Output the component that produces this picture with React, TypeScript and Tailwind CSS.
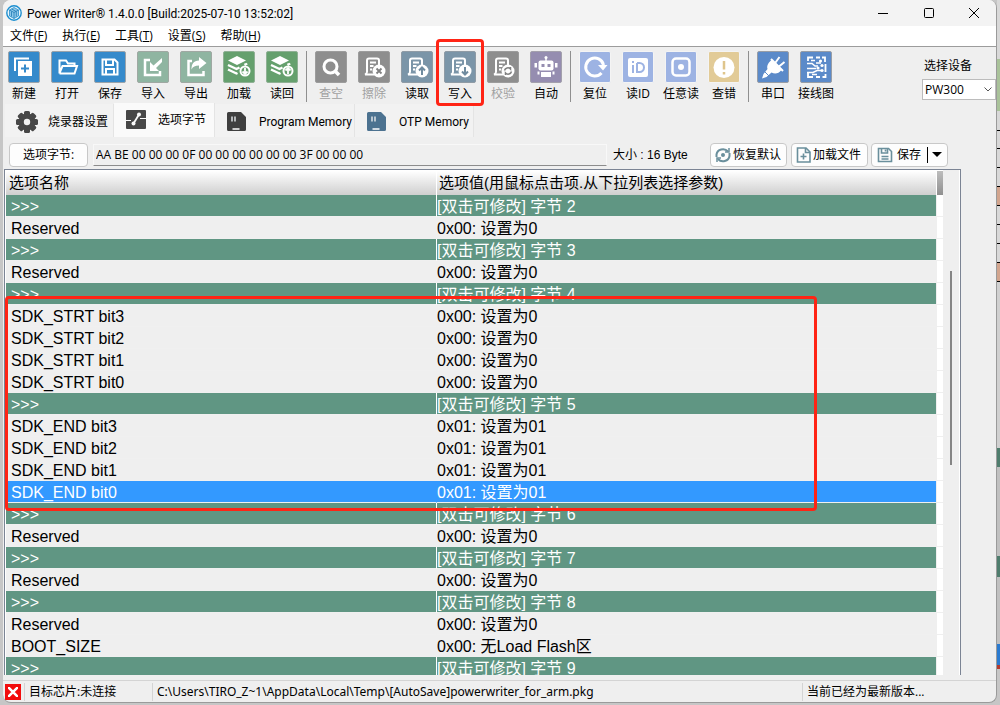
import { useState } from "react"
import type { ReactNode } from "react"

// ============================================
// TYPES & DATA
// ============================================

type Tool = {
  id: string
  label: string
  box: string
  disabled?: boolean
  marked?: boolean
}

const BLUE = "bg-[#358acb] border-[#9aa3aa]"
const MINT = "bg-[#8fb5a1] border-[#9fa8a2]"
const GREEN = "bg-[#65a06d] border-[#8fb094]"
const GRAY = "bg-[#8e8e8e] border-[#9c9c9c]"
const STEEL = "bg-[#7b95a8] border-[#8f9ba5]"
const PURPLE = "bg-[#958db0] border-[#a3a0ac]"
const SKY = "bg-[#9db3e3] border-[#f4f4f4]"
const SAND = "bg-[#e2cb97] border-[#f4f4f4]"
const ROYAL = "bg-[#5b8ac9] border-[#989da5]"

const toolGroups: Tool[][] = [
  [
    { id: "new", label: "新建", box: BLUE },
    { id: "open", label: "打开", box: BLUE },
    { id: "save", label: "保存", box: BLUE },
    { id: "import", label: "导入", box: MINT },
    { id: "export", label: "导出", box: MINT },
    { id: "load", label: "加载", box: GREEN },
    { id: "readback", label: "读回", box: GREEN },
  ],
  [
    { id: "blank", label: "查空", box: GRAY, disabled: true },
    { id: "erase", label: "擦除", box: GRAY, disabled: true },
    { id: "read", label: "读取", box: STEEL },
    { id: "write", label: "写入", box: STEEL, marked: true },
    { id: "verify", label: "校验", box: GRAY, disabled: true },
    { id: "auto", label: "自动", box: PURPLE },
  ],
  [
    { id: "reset", label: "复位", box: SKY },
    { id: "readid", label: "读ID", box: SKY },
    { id: "readany", label: "任意读", box: SKY },
    { id: "error", label: "查错", box: SAND },
  ],
  [
    { id: "serial", label: "串口", box: ROYAL },
    { id: "wiring", label: "接线图", box: ROYAL },
  ],
]

const menus = [
  { label: "文件", hotkey: "F" },
  { label: "执行", hotkey: "E" },
  { label: "工具", hotkey: "T" },
  { label: "设置", hotkey: "S" },
  { label: "帮助", hotkey: "H" },
]

type Row = { name: string; value: string; kind?: "group" }

const group = (n: number): Row => ({ name: ">>>", value: `[双击可修改] 字节 ${n}`, kind: "group" })
const zero = (name: string): Row => ({ name, value: "0x00: 设置为0" })
const one = (name: string): Row => ({ name, value: "0x01: 设置为01" })

const rows: Row[] = [
  group(2),
  zero("Reserved"),
  group(3),
  zero("Reserved"),
  group(4),
  zero("SDK_STRT bit3"),
  zero("SDK_STRT bit2"),
  zero("SDK_STRT bit1"),
  zero("SDK_STRT bit0"),
  group(5),
  one("SDK_END bit3"),
  one("SDK_END bit2"),
  one("SDK_END bit1"),
  one("SDK_END bit0"),
  group(6),
  zero("Reserved"),
  group(7),
  zero("Reserved"),
  group(8),
  zero("Reserved"),
  { name: "BOOT_SIZE", value: "0x00: 无Load Flash区" },
  group(9),
]

// ============================================
// ICONS
// ============================================

const layers = (
  <>
    <path d="M5 9.500 14 5l9 4.500-9 4.500z" fill="currentColor" stroke="none" />
    <path d="M5 14l8.500 4 3-1.500M5 18.500l8.500 4 1-.5M22.500 12.500l.5.5-1.500 1" strokeWidth="2.400" />
  </>
)

const sheet = (
  <>
    <path d="M21 14V9.500a2 2 0 0 0-2-2H11a2 2 0 0 0-2 2V21a3 3 0 0 1-2 2.500h9M9 20H8" />
    <path d="M12 11.500h6M12 15h3.500M12 18.500h2" />
  </>
)

const toolIcons: Record<string, ReactNode> = {
  new: (
    <>
      <path d="M7 20V7.500h14" strokeWidth="2" />
      <path d="M10 10h14v15H10z" fill="currentColor" stroke="none" />
      <path d="M17 13.500v8M13 17.500h8" stroke="#358acb" strokeWidth="2" />
    </>
  ),
  open: <path d="M8.500 22.500V9.500H15l2 3h6.500V15M8.500 22l3-7H26l-2.500 7.500h-15" strokeWidth="2" />,
  save: (
    <>
      <path d="M8.500 8.500h12l3 3v12h-15z" strokeWidth="2" />
      <path d="M12 9v5h7V9M12 23v-5h8v5" strokeWidth="2" />
    </>
  ),
  import: (
    <>
      <path d="M13 9H8v15h15v-4" strokeWidth="2.500" />
      <path d="M13 11v9h9l-3-3 6-6v-4l-8.500 7.500z" fill="currentColor" stroke="none" />
    </>
  ),
  export: (
    <>
      <path d="M12 10H8.500v14h15v-4" strokeWidth="2.500" />
      <path d="M19 6l7.500 6L19 18v-3.500c-4 0-6 1-7.500 4 0-5.500 2-9 7.500-9z" fill="currentColor" stroke="none" />
    </>
  ),
  load: (
    <>
      {layers}
      <circle cx="22" cy="20" r="4.500" strokeWidth="2" />
      <path d="M22 17v5.500M19.500 20.500l2.500 2.500 2.500-2.500" strokeWidth="1.800" />
    </>
  ),
  readback: (
    <>
      {layers}
      <circle cx="22" cy="20" r="4.500" strokeWidth="2" />
      <path d="M22 23v-5.500M19.500 19.500 22 17l2.500 2.500" strokeWidth="1.800" />
    </>
  ),
  blank: (
    <>
      <circle cx="15.500" cy="15.500" r="6.500" strokeWidth="3" />
      <path d="M20 20l4 4" strokeWidth="3.500" />
    </>
  ),
  erase: (
    <>
      {sheet}
      <circle cx="21" cy="20" r="6.500" fill="currentColor" stroke="none" />
      <path d="M18.500 17.500l5 5M23.500 17.500l-5 5" stroke="#7f7f7f" strokeWidth="1.800" />
    </>
  ),
  read: (
    <>
      {sheet}
      <circle cx="21" cy="20" r="6.500" fill="currentColor" stroke="none" />
      <path d="M21 24v-6M18 19.500l3-3 3 3" stroke="#6f8b9f" strokeWidth="2" />
    </>
  ),
  write: (
    <>
      {sheet}
      <circle cx="21" cy="20" r="6.500" fill="currentColor" stroke="none" />
      <path d="M21 16v6M18 20.500l3 3 3-3" stroke="#6f8b9f" strokeWidth="2" />
    </>
  ),
  verify: (
    <>
      {sheet}
      <circle cx="21" cy="20" r="6.500" fill="currentColor" stroke="none" />
      <path d="M17.500 19.500a3.500 3.500 0 0 1 6-1.500v-2M24.500 20.500a3.500 3.500 0 0 1-6 1.500v2" stroke="#7f7f7f" strokeWidth="1.500" />
    </>
  ),
  auto: (
    <>
      <rect x="8.500" y="9.500" width="15" height="10" rx="2" fill="currentColor" stroke="none" />
      <path d="M11 21h10v5H11zM4.500 12H7v4.500H4.500zM25 12h2.500v4.500H25zM7.500 20.500h2v3h-2zM22.500 20.500h2v3h-2z" fill="currentColor" stroke="none" />
      <path d="M16 10V7" strokeWidth="1.500" />
      <circle cx="16" cy="6.500" r="1.500" fill="currentColor" stroke="none" />
      <path d="M11.500 13h3v3h-3zM17.500 13h3v3h-3z" fill="#958db0" stroke="none" />
    </>
  ),
  reset: (
    <>
      <path d="M22.500 22a9 9 0 1 1 2-8" strokeWidth="3" />
      <path d="M19 14h9.500l-4.500 5.500z" fill="currentColor" stroke="none" />
    </>
  ),
  readid: (
    <>
      <rect x="6" y="7" width="20" height="19" rx="2" fill="currentColor" stroke="none" />
      <path d="M11 14v8M11 10v2M15 12v9h2.500a4.500 4.500 0 0 0 0-9H15" stroke="#9db3e3" strokeWidth="2" />
    </>
  ),
  readany: (
    <>
      <rect x="7.500" y="7.500" width="17" height="17" rx="3.500" strokeWidth="2.500" />
      <circle cx="16" cy="16" r="3" fill="currentColor" stroke="none" />
    </>
  ),
  error: (
    <>
      <circle cx="16" cy="16.500" r="10.500" fill="currentColor" stroke="none" />
      <path d="M16 10v8.500M16 21v2.500" stroke="#dfc58c" strokeWidth="2.500" />
    </>
  ),
  serial: (
    <>
      <path d="M14.500 9l10 10c-3 4-7 4-10 2.500L9.500 26l-4.500 1.500L6.500 23l4-5c-1-3.500 1-6.500 4-9z" fill="currentColor" stroke="none" />
      <path d="M14 8l12 12M18.500 11.500l4-5.500M22 15.500l5.500-4.500" strokeWidth="2" />
      <path d="M7.500 20.500l5 5" stroke="#5b8ac9" strokeWidth="1" />
    </>
  ),
  wiring: (
    <>
      <path d="M8 10V6.500h5M16 6.500h4M22 6.500h3V11M8 22v4h5M16 26h4M25.500 13v8M22.500 26h3v-3" strokeWidth="1.800" />
      <path d="M7 12.500h5l3 2.500h3M11 9.500h4M7 17.500h9M7 21.500h6l4-2h4M12 23.500h5M16 12h5" strokeWidth="1.500" />
      <circle cx="20.500" cy="10" r="1.600" fill="currentColor" stroke="none" />
      <circle cx="22" cy="14.500" r="1.600" fill="currentColor" stroke="none" />
      <circle cx="18" cy="17" r="1.600" fill="currentColor" stroke="none" />
      <circle cx="22" cy="19.500" r="1.600" fill="currentColor" stroke="none" />
    </>
  ),
}

function AppLogo() {
  return (
    <svg viewBox="0 0 16 16" className="size-4">
      <circle cx="8" cy="8" r="7.200" fill="#e9f5fb" stroke="#1d8fd0" strokeWidth="1.400" />
      <path d="M8 2.500 12.500 5v6L8 13.500 3.500 11V5z" fill="#8cc8ea" stroke="#2c8fca" strokeWidth=".8" />
      <path d="M8 7.500v6M3.500 5 8 7.500 12.500 5M5.700 4l4.500 2.500M5.500 6.500v5M10.300 6.500v5" fill="none" stroke="#1f78b4" strokeWidth=".8" />
    </svg>
  )
}

function GearIcon() {
  return (
    <svg viewBox="0 0 24 24" className="size-6 text-[#474747]" fill="currentColor">
      {[0, 45, 90, 135].map((a) => (
        <rect key={a} x="9" y="1" width="6" height="22" rx="1.500" transform={`rotate(${a} 12 12)`} />
      ))}
      <circle cx="12" cy="12" r="8.500" />
      <circle cx="12" cy="12" r="3.200" fill="#f2f2f2" />
    </svg>
  )
}

function OptionIcon() {
  return (
    <svg viewBox="0 0 20 20" className="size-5">
      <rect width="20" height="19" rx="1" fill="#474747" />
      <path d="M0 10.500h5M14 8.500h6" stroke="#fafafa" strokeWidth="1" fill="none" />
      <path d="M7.500 13.500 13 4.500" stroke="#fafafa" strokeWidth="1.800" fill="none" />
      <circle cx="7.500" cy="13.500" r="2" fill="#fafafa" />
      <circle cx="13" cy="4.500" r="2" fill="#fafafa" />
    </svg>
  )
}

function ChipIcon({ color }: { color: string }) {
  return (
    <svg viewBox="0 0 20 20" className="size-5">
      <path d="M1.500 0H14l5 5v12.500a1.500 1.500 0 0 1-1.500 1.500h-16A1.500 1.500 0 0 1 0 17.500v-16A1.500 1.500 0 0 1 1.500 0z" fill={color} />
      <path d="M5 4.500v5M8 4.500v5" stroke="#dfe3e6" strokeWidth="1.500" />
      <path d="M5.500 17h7" stroke="#fff" strokeWidth="1.500" />
    </svg>
  )
}

const iconLine = "size-4 shrink-0 fill-none stroke-[#6a8f9c]"

function RestoreIcon() {
  return (
    <svg viewBox="0 0 16 16" className={iconLine} strokeWidth="2">
      <path d="M1.500 10V7.500A6.500 6 0 0 1 13 4.500M14.500 6v3A6.500 6 0 0 1 3 12" />
      <path d="M14 1v4h-4M2 15v-4h4" strokeWidth="1.500" />
      <circle cx="8" cy="8" r="2" fill="#6a8f9c" stroke="none" />
    </svg>
  )
}

function AddFileIcon() {
  return (
    <svg viewBox="0 0 16 16" className={iconLine} strokeWidth="1.600">
      <path d="M1.500 1H10l4 4v10H1.500z" />
      <path d="M9.500 1v4.500H14M7.500 6.500v6M4.500 9.500h6" />
    </svg>
  )
}

function SaveIcon() {
  return (
    <svg viewBox="0 0 16 16" className={iconLine} strokeWidth="1.600">
      <path d="M1.500 1.500h10l3 3v10h-13z" />
      <path d="M4.500 2v4h6V2M8.500 2.500v2M4.500 9.500h7M4.500 12h7" />
    </svg>
  )
}

// ============================================
// PARTS
// ============================================

function ToolButton({ tool }: { tool: Tool }) {
  return (
    <button
      type="button"
      disabled={tool.disabled}
      className="relative flex w-8 flex-col items-center gap-[5px] whitespace-nowrap"
    >
      <span className={`size-8 rounded-xs border text-white ${tool.box}`}>
        <svg viewBox="1 1 30 30" className="size-full" fill="none" stroke="currentColor" strokeWidth="2">
          {toolIcons[tool.id]}
        </svg>
      </span>
      <span className={`text-xs leading-3 ${tool.disabled ? "text-[#a0a0a0]" : "text-black"}`}>{tool.label}</span>
      {tool.marked && (
        <span className="absolute -inset-x-2 -top-3 -bottom-[6px] rounded-sm border-3 border-[#ff2415]" />
      )}
    </button>
  )
}

type TabProps = {
  label: string
  icon: ReactNode
  active: boolean
  onSelect: () => void
  className: string
}

function Tab({ label, icon, active, onSelect, className }: TabProps) {
  return (
    <button
      type="button"
      role="tab"
      aria-selected={active}
      onClick={onSelect}
      className={`flex items-center border-r border-[#e4e4e4] font-['Roboto','Noto_Sans_CJK_SC',sans-serif] text-xs whitespace-nowrap ${className} ${
        active ? "h-[34px] bg-[#fafafa]" : "h-[33px] bg-[#f2f2f2] pt-[3px]"
      }`}
    >
      {icon}
      {label}
    </button>
  )
}

const panelButton = "flex h-6 items-center rounded border border-[#c8c8c8] bg-[#fdfdfd] text-xs whitespace-nowrap"

// ============================================
// APP
// ============================================

export default function App() {
  const [tab, setTab] = useState("option")
  const [selected, setSelected] = useState(13)

  return (
    <div className="flex h-screen overflow-hidden bg-[#c6c6c6] pb-[2px] pl-[3px] font-['Open_Sans','Noto_Sans_CJK_SC',sans-serif] text-xs text-black">
      <div className="flex min-w-0 flex-1 flex-col overflow-hidden rounded-lg border-r border-b border-[#9a9a9a] bg-[#efefef]">
        {/* Title bar */}
        <header className="flex h-[26px] shrink-0 items-center bg-[#f3f3f3] pl-[3px]">
          <AppLogo />
          <h1 className="ml-[5px] flex-1 pt-px font-['Roboto',sans-serif] whitespace-nowrap">
            Power Writer® 1.4.0.0 [Build:2025-07-10 13:52:02]
          </h1>
          <div className="flex">
            <button type="button" aria-label="最小化" className="flex h-6 w-[46px] items-center justify-center">
              <svg viewBox="0 0 10 10" className="size-[10px]" stroke="#000"><path d="M0 5.500h10" /></svg>
            </button>
            <button type="button" aria-label="最大化" className="flex h-6 w-[45px] items-center justify-center">
              <svg viewBox="0 0 10 10" className="size-[10px]" stroke="#000" fill="none"><rect x=".5" y=".5" width="9" height="9" rx="1" /></svg>
            </button>
            <button type="button" aria-label="关闭" className="flex h-6 w-[45px] items-center justify-center">
              <svg viewBox="0 0 10 10" className="size-[10px]" stroke="#000"><path d="M0 0l10 10M10 0 0 10" /></svg>
            </button>
          </div>
        </header>

        {/* Menu */}
        <nav className="flex h-5 shrink-0 items-center gap-[15px] bg-white pl-[7px]">
          {menus.map((m) => (
            <button key={m.hotkey} type="button" className="whitespace-nowrap">
              {m.label}(<u>{m.hotkey}</u>)
            </button>
          ))}
        </nav>

        {/* Toolbar */}
        <div className="flex h-[57px] shrink-0 items-start justify-between border-t border-[#9c9c9c] pt-1 pl-[5px]">
          <div className="flex">
            {toolGroups.map((tools, i) => (
              <div key={i} className="flex items-start">
                {i > 0 && <span className="mx-2 h-[51px] w-px bg-[#8f8f8f]" />}
                <div className="flex gap-[11px]">
                  {tools.map((t) => (
                    <ToolButton key={t.id} tool={t} />
                  ))}
                </div>
              </div>
            ))}
          </div>
          <div className="flex w-[74px] flex-col gap-1 pt-[6px]">
            <label htmlFor="device" className="pl-[2px] leading-[18px]">选择设备</label>
            <div className="relative">
              <select id="device" className="h-[21px] w-full appearance-none border border-[#bcbcbc] bg-white pl-[2px] leading-4">
                <option>PW300</option>
              </select>
              <svg viewBox="0 0 8 5" className="pointer-events-none absolute top-2 right-1 h-[5px] w-2" fill="none" stroke="#555">
                <path d="M.5.5 4 4 7.500.5" />
              </svg>
            </div>
          </div>
        </div>

        {/* Tabs */}
        <div role="tablist" className="flex h-[34px] shrink-0 items-end pl-[2px]">
          <Tab label="烧录器设置" icon={<GearIcon />} active={tab === "writer"} onSelect={() => setTab("writer")} className="w-[109px] gap-[9px] pl-[10px]" />
          <Tab label="选项字节" icon={<OptionIcon />} active={tab === "option"} onSelect={() => setTab("option")} className="w-[101px] gap-3 pl-3" />
          <Tab label="Program Memory" icon={<ChipIcon color="#3f3f3f" />} active={tab === "program"} onSelect={() => setTab("program")} className="w-[140px] gap-3 pl-3" />
          <Tab label="OTP Memory" icon={<ChipIcon color="#4c7290" />} active={tab === "otp"} onSelect={() => setTab("otp")} className="w-[119px] gap-3 pl-3" />
        </div>

        {/* Option bytes */}
        <div className="flex h-8 shrink-0 items-center pt-[3px] pr-12 pl-[6px]">
          <button type="button" className={`${panelButton} w-[79px] justify-center`}>选项字节:</button>
          <input
            readOnly
            aria-label="选项字节"
            value="AA BE 00 00 00 0F 00 00 00 00 00 00 3F 00 00 00"
            className="ml-[5px] h-[22px] min-w-0 flex-1 border border-[#f8f8f8] border-b-[#8c8c8c] bg-transparent pl-[2px] outline-none"
          />
          <span className="ml-[6px] w-[97px] whitespace-nowrap font-['Liberation_Sans','Noto_Sans_CJK_SC',sans-serif]">大小 : 16 Byte</span>
          <button type="button" className={`${panelButton} w-[77px] gap-[2px] pl-1`}>
            <RestoreIcon />
            恢复默认
          </button>
          <button type="button" className={`${panelButton} ml-1 w-[77px] gap-px pl-1`}>
            <AddFileIcon />
            加载文件
          </button>
          <div className={`${panelButton} ml-[3px] w-[77px]`}>
            <button type="button" className="flex items-center gap-1 pr-[6px] pl-[5px]">
              <SaveIcon />
              保存
            </button>
            <button type="button" aria-label="更多保存选项" className="flex h-4 items-center border-l border-black pl-1">
              <svg viewBox="0 0 10 5" className="h-[5px] w-[10px]"><path d="M0 0h10L5 5z" /></svg>
            </button>
          </div>
        </div>

        {/* Table */}
        <div className="relative mr-[35px] ml-px flex min-h-0 flex-1 overflow-hidden border-t border-r border-l border-[#7b8494] font-['Liberation_Sans','Noto_Sans_CJK_SC',sans-serif] text-base">
          <div className="min-w-0 flex-1 overflow-hidden border-t border-l border-white">
            <table className="w-full table-fixed border-separate border-spacing-0">
              <colgroup>
                <col className="w-[46%]" />
                <col />
                <col className="w-[7px]" />
              </colgroup>
              <thead>
                <tr className="h-6 bg-linear-to-b from-white to-[#cfcfcf] text-left text-[15px] leading-5">
                  <th className="border-r border-white pl-[3px] font-normal">选项名称</th>
                  <th className="pl-[2px] font-normal whitespace-nowrap">选项值(用鼠标点击项.从下拉列表选择参数)</th>
                  <th aria-hidden="true" className="border-l border-white bg-linear-to-b from-[#bdbdbd] to-[#909090] p-0" />
                </tr>
              </thead>
              <tbody>
                {rows.map((r, i) => {
                  const tone =
                    i === selected ? "bg-[#3399ff] text-white" : r.kind === "group" ? "bg-[#609683] text-white" : "bg-[#efefef]"
                  const cell = `h-[22px] border-b border-b-[#f0f0f0] pt-[2px] pr-0 pb-0 leading-[19px] whitespace-nowrap ${tone}`
                  return (
                    <tr key={i} onClick={() => setSelected(i)}>
                      <td className={`${cell} border-r pl-[5px] ${r.kind === "group" ? "border-r-white" : "border-r-transparent"}`}>{r.name}</td>
                      <td className={`${cell} pl-0`}>{r.value}</td>
                      <td className="border-b border-l border-[#efefef] bg-white p-0" />
                    </tr>
                  )
                })}
              </tbody>
            </table>
          </div>
          <div className="w-[17px] shrink-0 border-r border-white pt-[101px] pl-[7px]">
            <div className="h-[194px] w-[2px] bg-[#858585]" />
          </div>
          <div className="pointer-events-none absolute top-[126px] left-0 h-[215px] w-[85%] rounded-sm border-3 border-[#ff2415]" />
        </div>

        {/* Status bar */}
        <footer className="mt-[5px] flex h-[22px] shrink-0 items-center border-t border-[#d4d4d4]">
          <span className="ml-[2px] flex size-4 items-center justify-center bg-[#f20d0d]">
            <svg viewBox="0 0 10 10" className="size-[10px]" stroke="#fff" strokeWidth="2.500"><path d="M0 0l10 10M10 0 0 10" /></svg>
          </span>
          <span className="ml-[3px] w-32 border-l border-[#d4d4d4] pl-1 leading-[18px] whitespace-nowrap">目标芯片:未连接</span>
          <span className="min-w-0 flex-1 border-l border-[#d4d4d4] pl-1 font-['Noto_Sans',sans-serif] leading-[18px] whitespace-nowrap">
            C:\Users\TIRO_Z~1\AppData\Local\Temp\[AutoSave]powerwriter_for_arm.pkg
          </span>
          <span className="w-[194px] border-l border-[#d4d4d4] pl-1 leading-[18px] whitespace-nowrap">当前已经为最新版本...</span>
        </footer>
      </div>

      {/* Sliver of the window behind */}
      <div aria-hidden="true" className="flex w-[3px] shrink-0 flex-col">
        <div className="h-[59px] bg-[#d8d8d8]" />
        <div className="h-[52px] bg-[#a9c29a]" />
        <div className="h-5 border-b border-black bg-[#d8d8d8]" />
        <div className="h-[18px] border-b border-black bg-[#d8d8d8]" />
        <div className="h-[19px] border-b border-black bg-[#d8d8d8]" />
        <div className="h-[19px] border-b border-black bg-[#d8d8d8]" />
        <div className="h-[19px] border-b border-black bg-[#d2a58e]" />
        <div className="h-[19px] border-b border-black bg-[#d8d8d8]" />
        <div className="h-[19px] border-b border-black bg-[#d8d8d8]" />
        <div className="h-[19px] border-b border-black bg-[#d8d8d8]" />
        <div className="h-[19px] border-b border-black bg-[#d2a58e]" />
        <div className="h-[166px] bg-[#d0d0d0]" />
        <div className="h-[19px] bg-[#4f7d6d]" />
        <div className="h-[89px] bg-[#c0c0c0]" />
        <div className="h-[21px] bg-[#4f7d6d]" />
        <div className="h-[67px] bg-[#c0c0c0]" />
        <div className="h-[21px] bg-[#2b7bd0]" />
        <div className="h-1 bg-[#b33a30]" />
      </div>
    </div>
  )
}
